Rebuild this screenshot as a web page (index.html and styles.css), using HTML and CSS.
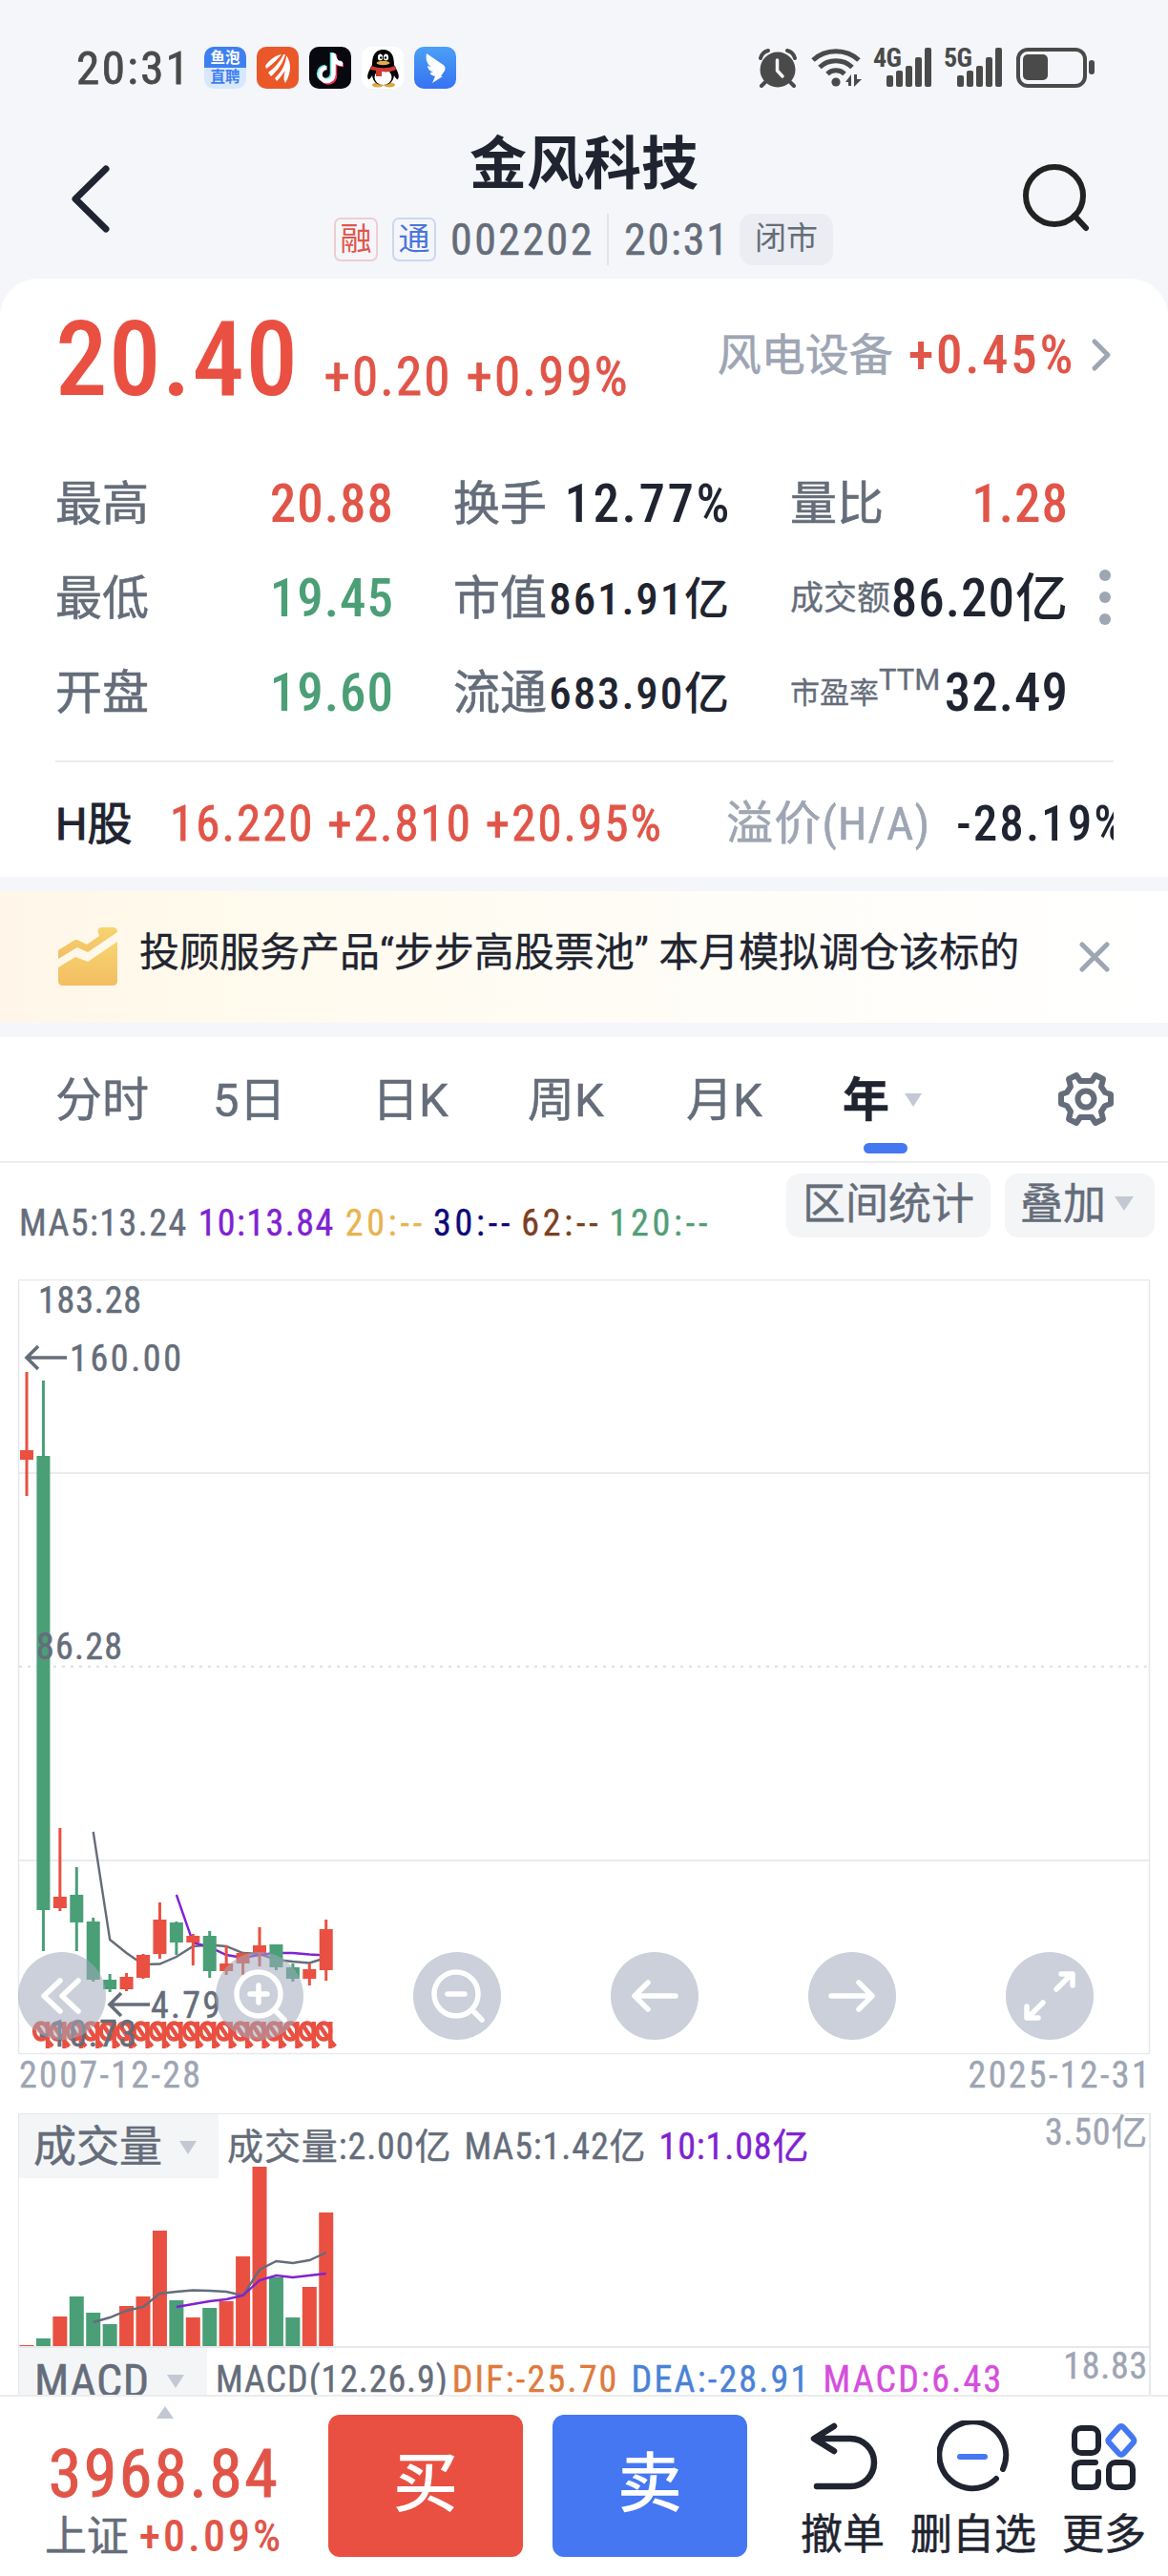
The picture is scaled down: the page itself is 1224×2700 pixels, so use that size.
FILE: index.html
```html
<!DOCTYPE html>
<html lang="zh-CN">
<head>
    <meta charset="UTF-8">
    <meta name="viewport" content="width=device-width, initial-scale=1.0">
    <title>金风科技 002202</title>
    <link rel="stylesheet" href="styles.css">
</head>
<body>
    <div class="status-bar">
        <span class="clock num">20:31</span>
        <div class="apps">
            <div class="app app-yupao"><span>鱼泡</span><span>直聘</span></div>
            <svg class="app" viewBox="0 0 44 44">
                <rect width="44" height="44" rx="10" fill="#ea5728"/>
                <path fill="#fff" d="M9 20C14 13 20 9 26 8C22 13 15 20 10 23ZM12 27C19 22 25 15 28 8L30 8C28 17 21 26 15 31ZM19 33C26 27 31 17 31 9C37 17 36 28 30 38C28 35 28 31 30 25C27 29 25 32 21 36Z"/>
            </svg>
            <svg class="app" viewBox="0 0 44 44">
                <rect width="44" height="44" rx="10" fill="#08080f"/>
                <path fill="none" stroke="#5fe6e6" stroke-width="4.5" d="M24 6V28A7 7 0 1 1 17 21M24 8C25 14 29 17 34 17"/>
                <path fill="none" stroke="#f0385a" stroke-width="4.5" d="M27 8V30A7 7 0 0 1 14 34M27 12C28 16 31 19 36 19"/>
                <path fill="none" stroke="#fff" stroke-width="4.5" d="M25.500 7V29A7 7 0 1 1 18.500 22M26 10C27 15 30 18 35 18"/>
            </svg>
            <svg class="app" viewBox="0 0 44 44">
                <rect width="44" height="44" rx="10" fill="#fff"/>
                <ellipse cx="17" cy="40" rx="6" ry="2.500" fill="#dfa63f"/>
                <ellipse cx="29" cy="40" rx="6" ry="2.500" fill="#dfa63f"/>
                <path fill="#000" d="M11 19C11 8 15 3 22.500 3S34 8 34 19C38 26 40 31 38 34C37 35 35 32 34 30C33 37 29 40 22.500 40S12 37 11 30C10 32 8 35 7 34C5 31 7 26 11 19Z"/>
                <ellipse cx="22.500" cy="32" rx="9" ry="8" fill="#fff"/>
                <ellipse cx="19.500" cy="11" rx="2.600" ry="3.600" fill="#fff"/>
                <ellipse cx="25.500" cy="11" rx="2.600" ry="3.600" fill="#fff"/>
                <circle cx="20.200" cy="11.500" r="1.200"/><circle cx="25" cy="11.500" r="1.200"/>
                <ellipse cx="22.500" cy="17" rx="7" ry="2.200" fill="#e4ac42"/>
                <path fill="#cf3a33" d="M10 20C18 23 28 23 35 20L36 24C32 26 26 27 21 26V31H15V25L9 24Z"/>
            </svg>
            <svg class="app" viewBox="0 0 44 44">
                <defs><linearGradient id="ding" x1="0" y1="0" x2="0" y2="1"><stop offset="0" stop-color="#4ba0f6"/><stop offset="1" stop-color="#3672f2"/></linearGradient></defs>
                <rect width="44" height="44" rx="10" fill="url(#ding)"/>
                <path fill="#fff" d="M13 7L29 18C33 20 33 23 32 25L28 31L30 31L19 38L22 31L19 30C17 29 17 28 17 27L20 27C16 25 14 23 14 20L18 21C13 18 12 13 13 7Z"/>
            </svg>
        </div>
        <div class="signals">
            <svg width="42" height="42" viewBox="0 0 42 42" fill="none" stroke="#4a4a4a">
                <circle cx="21" cy="23" r="18.500" fill="#4a4a4a" stroke="none"/>
                <path stroke-width="4" stroke-linecap="round" d="M3 11C4 7 7 4 11 3M39 11C38 7 35 4 31 3M8 36L4 40M34 36L38 40"/>
                <path stroke="#f4f6fa" stroke-width="3.500" stroke-linecap="round" d="M20.500 13V24L26 30"/>
            </svg>
            <svg class="wifi" width="54" height="42" viewBox="0 0 54 42" fill="none" stroke="#4a4a4a" stroke-width="5">
                <path d="M2 13C15 .500 37 .500 50 13M9 20.500C18 11.500 34 11.500 43 20.500M17 27.500C22 22.500 30 22.500 35 27.500"/>
                <circle cx="26" cy="36" r="4.600" fill="#4a4a4a" stroke="none"/>
                <path fill="#4a4a4a" stroke="none" d="M36 36L42 28V40H39V36ZM45 28H48V33H53L45 41Z"/>
            </svg>
            <div class="cell">
                <span class="num">4G</span>
                <svg width="62" height="42" viewBox="0 0 62 42" fill="#4a4a4a"><rect x="14" y="29" width="7" height="12" rx="2"/><rect x="24" y="24" width="7" height="17" rx="2"/><rect x="34" y="19" width="7" height="22" rx="2"/><rect x="44" y="10" width="7" height="31" rx="2"/><rect x="54" y="0" width="7" height="41" rx="2"/></svg>
            </div>
            <div class="cell">
                <span class="num">5G</span>
                <svg width="62" height="42" viewBox="0 0 62 42" fill="#4a4a4a"><rect x="14" y="29" width="7" height="12" rx="2"/><rect x="24" y="24" width="7" height="17" rx="2"/><rect x="34" y="19" width="7" height="22" rx="2"/><rect x="44" y="10" width="7" height="31" rx="2"/><rect x="54" y="0" width="7" height="41" rx="2"/></svg>
            </div>
            <svg class="battery" width="84" height="42" viewBox="0 0 84 42">
                <rect x="2" y="2" width="70" height="38" rx="10" fill="none" stroke="#4a4a4a" stroke-width="4"/>
                <rect x="7" y="7" width="26" height="27" rx="5" fill="#4a4a4a"/>
                <rect x="76" y="13" width="6" height="15" rx="3" fill="#4a4a4a"/>
            </svg>
        </div>
    </div>

    <div class="nav">
        <svg class="back" width="44" height="74" viewBox="0 0 44 74"><path d="M37 5L5 36.500L37 68" fill="none" stroke="#1f2430" stroke-width="7" stroke-linecap="round" stroke-linejoin="round"/></svg>
        <div class="nav-title">
            <h1>金风科技</h1>
            <div class="sub">
                <span class="tag tag-red">融</span>
                <span class="tag tag-blue">通</span>
                <span class="code num">002202</span>
                <span class="time num">20:31</span>
                <span class="closed">闭市</span>
            </div>
        </div>
        <svg class="search" width="74" height="74" viewBox="0 0 74 74" fill="none" stroke="#222" stroke-width="6" stroke-linecap="round"><circle cx="34" cy="33" r="30"/><path d="M55 54L67 67"/></svg>
    </div>

    <div class="card">
        <div class="quote">
            <span class="price num up">20.40</span>
            <span class="change num up">+0.20 +0.99%</span>
            <div class="industry">
                <span class="industry-name">风电设备</span>
                <span class="num up">+0.45%</span>
                <svg width="22" height="36" viewBox="0 0 22 36"><path d="M4 4L18 18L4 32" fill="none" stroke="#9ea5b3" stroke-width="5" stroke-linecap="round" stroke-linejoin="round"/></svg>
            </div>
        </div>

        <div class="stats-wrap">
            <div class="stats">
                <div class="stat"><label>最高</label><b class="num up">20.88</b></div>
                <div class="stat"><label>换手</label><b class="num wide">12.77%</b></div>
                <div class="stat"><label>量比</label><b class="num up">1.28</b></div>
                <div class="stat"><label>最低</label><b class="num down">19.45</b></div>
                <div class="stat"><label>市值</label><b class="num small">861.91亿</b></div>
                <div class="stat"><label class="tight">成交额</label><b class="num">86.20亿</b></div>
                <div class="stat"><label>开盘</label><b class="num down">19.60</b></div>
                <div class="stat"><label>流通</label><b class="num small">683.90亿</b></div>
                <div class="stat"><label class="tighter">市盈率<sup>TTM</sup></label><b class="num">32.49</b></div>
            </div>
            <div class="dots"><i></i><i></i><i></i></div>
        </div>

        <div class="h-share">
            <span class="h-name">H股</span>
            <span class="h-price num up">16.220 +2.810 +20.95%</span>
            <span class="premium num">溢价(H/A)</span>
            <span class="h-val num">-28.19%</span>
        </div>
    </div>

    <div class="banner">
        <svg width="62" height="62" viewBox="0 0 62 62">
            <defs><linearGradient id="gold" x1="0" y1="0" x2="0" y2="1"><stop offset="0" stop-color="#f7d56f"/><stop offset="1" stop-color="#f3bd63"/></linearGradient></defs>
            <path fill="url(#gold)" d="M0 24L16 14Q19 12 22 14L30 18L43 9Q39 0 46 0H57Q62 0 62 5L31 26L20 21L0 33Z"/>
            <path fill="url(#gold)" d="M0 42L18 31L31 36L62 15V56Q62 61 57 61H5Q0 61 0 56Z"/>
        </svg>
        <span class="banner-text">投顾服务产品“步步高股票池” 本月模拟调仓该标的</span>
        <svg class="close" width="32" height="32" viewBox="0 0 32 32"><path d="M3 3L29 29M29 3L3 29" stroke="#9ea5b3" stroke-width="5" stroke-linecap="round"/></svg>
    </div>

    <div class="tabs">
        <span class="tab t1">分时</span>
        <span class="tab t2">5日</span>
        <span class="tab t3">日K</span>
        <span class="tab t4">周K</span>
        <span class="tab t5">月K</span>
        <span class="tab t6 active">年<i class="caret"></i></span>
        <svg class="gear" width="60" height="58" viewBox="-30 -29 60 58" fill="none" stroke="#656d7a" stroke-width="6" stroke-linejoin="round">
            <path d="M-10 -25L-6 -19H6L10 -25L18 -21L16 -13L20 -7L26 -5V5L20 7L16 13L18 21L10 25L6 19H-6L-10 25L-18 21L-16 13L-20 7L-26 5V-5L-20 -7L-16 -13L-18 -21Z"/>
            <circle r="8.500"/>
        </svg>
    </div>

    <div class="ma-row">
        <div class="ma num">
            <span>MA5:13.24</span><span class="c-purple">10:13.84</span><span class="c-gold dash">20:--</span><span class="c-navy dash">30:--</span><span class="c-brown dash">62:--</span><span class="c-green dash">120:--</span>
        </div>
        <span class="pill">区间统计</span>
        <span class="pill">叠加<i class="caret"></i></span>
    </div>

    <div class="chart">
        <svg id="kline" width="1224" height="813" viewBox="0 1341 1224 813"></svg>
        <div class="tools">
            <svg viewBox="-46 -46 92 92"><path d="M-2 -16L-19 0L-2 16M17 -16L0 0L17 16"/></svg>
            <svg viewBox="-46 -46 92 92"><circle cx="-1" cy="-2" r="23"/><path d="M-10 -2H8M-1 -11V7M16 15L26 25"/></svg>
            <svg viewBox="-46 -46 92 92"><circle cx="-1" cy="-2" r="23"/><path d="M-10 -2H8M16 15L26 25"/></svg>
            <svg viewBox="-46 -46 92 92"><path d="M22 0H-20M-7 -14L-21 0L-7 14"/></svg>
            <svg viewBox="-46 -46 92 92"><path d="M-22 0H20M7 -14L21 0L7 14"/></svg>
            <svg viewBox="-46 -46 92 92"><path d="M7 -7L22 -22M12 -23H24V-11M-7 7L-22 22M-12 23H-24V11"/></svg>
        </div>
    </div>
    <div class="dates num"><span>2007-12-28</span><span>2025-12-31</span></div>

    <div class="panel volume">
        <svg id="vol" width="1185" height="244" viewBox="20 2216 1185 244"></svg>
        <div class="panel-head">
            <span class="picker">成交量<i class="caret"></i></span>
            <span class="legend num"><span>成交量:2.00亿</span><span>MA5:1.42亿</span><span class="c-purple">10:1.08亿</span></span>
            <span class="max num">3.50亿</span>
        </div>
    </div>
    <div class="panel macd">
        <div class="panel-head">
            <span class="picker">MACD<i class="caret"></i></span>
            <span class="legend num"><span>MACD(12.26.9)</span><span class="c-orange">DIF:-25.70</span><span class="c-blue">DEA:-28.91</span><span class="c-pink">MACD:6.43</span></span>
            <span class="max num">18.83</span>
        </div>
    </div>

    <div class="bottom-bar">
        <div class="index">
            <i class="caret caret-up"></i>
            <div class="index-value num up">3968.84</div>
            <div class="index-name">上证 <span class="num up">+0.09%</span></div>
        </div>
        <div class="btn buy">买</div>
        <div class="btn sell">卖</div>
        <div class="actions">
            <div class="action">
                <svg width="76" height="76" viewBox="0 0 76 76" fill="none" stroke="#1f2430" stroke-width="6.500" stroke-linecap="round" stroke-linejoin="round"><path d="M29 6L8 19L29 32M10 19H46A25 25 0 0 1 46 69H11"/></svg>
                <span>撤单</span>
            </div>
            <div class="action">
                <svg width="76" height="76" viewBox="0 0 76 76" fill="none" stroke="#1f2430" stroke-width="6" stroke-linecap="round"><path d="M69 51A35 35 0 1 0 62 61"/><path stroke="#4577f3" d="M24 38H50"/></svg>
                <span>删自选</span>
            </div>
            <div class="action">
                <svg width="76" height="76" viewBox="0 0 76 76" fill="none" stroke="#1f2430" stroke-width="6" stroke-linecap="round" stroke-linejoin="round"><rect x="7" y="8" width="25" height="26" rx="7"/><rect x="43" y="44" width="25" height="26" rx="7"/><path d="M32 54V63Q32 70 25 70H14Q7 70 7 63V51Q7 44 14 44H29"/><path stroke="#4577f3" d="M53 8Q56 4 59 8L68 18Q71 21 68 24L59 34Q56 38 53 34L44 24Q41 21 44 18Z"/></svg>
                <span>更多</span>
            </div>
        </div>
    </div>
    <script src="chart.js"></script>
</body>
</html>
```
FILE: styles.css
```css
* {
    box-sizing: border-box;
}

body {
    margin: 0;
    width: 1224px;
    height: 2700px;
    overflow: hidden;
    background: #f4f6fa;
    color: #1f2430;
    font-family: Roboto, "Noto Sans CJK SC", sans-serif;
    display: flex;
    flex-direction: column;
}

svg {
    display: block;
    flex: none;
}

.num {
    font-stretch: 75%;
    letter-spacing: 0.04em;
    white-space: nowrap;
}

.up { color: #e15549; }
.down { color: #4b9f76; }

.c-purple { color: #7f22d2; }
.c-gold { color: #e8b350; }
.c-navy { color: #0b0a78; }
.c-brown { color: #7c401f; }
.c-green { color: #519e76; }
.c-orange { color: #de7a3c; }
.c-blue { color: #4a82d8; }
.c-pink { color: #d44fdc; }

.caret {
    display: inline-block;
    border: 9px solid transparent;
    border-top: 14px solid #c3c8d4;
    border-bottom: 0;
}

/* status bar */
.status-bar {
    height: 120px;
    flex: none;
    display: flex;
    padding: 49px 75px 0 80px;
    color: #4a4a4a;
}

.clock {
    width: 134px;
    font-size: 49px;
    line-height: 46px;
    letter-spacing: 0.05em;
    -webkit-text-stroke: 0.8px #4a4a4a;
}

.apps {
    display: flex;
    gap: 11px;
}

.app {
    width: 44px;
    height: 44px;
}

.app-yupao {
    border-radius: 10px;
    background: linear-gradient(#3f80f0 50%, #d8e8fc 50%);
    font-size: 15.5px;
    font-weight: 700;
    line-height: 20px;
    text-align: center;
    color: #fff;
    padding-top: 2px;
}

.app-yupao span {
    display: block;
}

.app-yupao span + span {
    color: #3f80f0;
}

.signals {
    margin-left: auto;
    padding-top: 1px;
    display: flex;
}

.wifi {
    margin-left: 14px;
}

.cell {
    position: relative;
    margin-left: 11px;
}

.cell + .cell {
    margin-left: 12px;
}

.cell span {
    position: absolute;
    left: 0;
    top: 0;
    font-size: 28px;
    line-height: 21px;
    font-weight: 700;
    letter-spacing: -0.02em;
}

.battery {
    margin-left: 14px;
}

/* title */
.nav {
    height: 172px;
    flex: none;
    display: grid;
    grid-template-columns: 344px 536px 344px;
}

.back {
    margin: 52px 0 0 74px;
}

.search {
    margin: 52px 0 0 191px;
}

.nav-title h1 {
    margin: 17px 0 0;
    font-size: 60px;
    line-height: 72px;
    font-weight: 700;
    text-align: center;
}

.sub {
    display: flex;
    align-items: center;
    height: 54px;
    margin-top: 15px;
    padding-left: 6px;
    color: #656d7a;
}

.tag {
    width: 46px;
    height: 46px;
    line-height: 41px;
    border: 2px solid;
    border-radius: 7px;
    font-size: 33px;
    text-align: center;
    margin-right: 15px;
}

.tag-red {
    color: #e0564a;
    border-color: #efcdd0;
}

.tag-blue {
    color: #4b74dc;
    border-color: #ccd8ef;
}

.code {
    font-size: 46px;
    width: 166px;
    border-right: 2px solid #e2e4e9;
    line-height: 54px;
    letter-spacing: 0.053em;
}

.time {
    font-size: 46px;
    padding-left: 16px;
    width: 137px;
}

.code, .time {
    -webkit-text-stroke: 0.5px #656d7a;
}

.closed {
    width: 98px;
    line-height: 52px;
    height: 54px;
    border-radius: 14px;
    background: #ecedf2;
    font-size: 33px;
    text-align: center;
}

/* quote card */
.card {
    height: 627px;
    flex: none;
    background: #fff;
    border-radius: 40px 40px 0 0;
    padding: 31px 57px 0 58px;
}

.quote {
    height: 108px;
    display: flex;
    align-items: baseline;
    line-height: 108px;
}

.price {
    font-size: 109px;
    font-weight: 500;
    letter-spacing: 0.013em;
    color: #e95041;
}

.change {
    font-size: 55px;
    margin-left: 26px;
    -webkit-text-stroke: 0.8px #e15549;
}

.industry {
    margin-left: auto;
    display: flex;
    align-items: center;
    align-self: flex-start;
    height: 98px;
    font-size: 55px;
    font-weight: 500;
}

.industry .num {
    letter-spacing: 0.048em;
}

.industry-name {
    font-size: 46px;
    font-weight: 400;
    color: #9ea5b3;
    margin-right: 16px;
    -webkit-text-stroke: 0.6px #9ea5b3;
}

.industry svg {
    margin: 0 2px 0 16px;
}

.stats-wrap {
    display: flex;
    margin-top: 48px;
}

.stats {
    display: grid;
    grid-template-columns: 353px 289px 290px;
    gap: 0 64px;
    grid-auto-rows: 99px;
    width: 1060px;
}

.stat {
    display: flex;
    justify-content: space-between;
    line-height: 99px;
    white-space: nowrap;
}

.stat label {
    font-size: 49px;
    color: #656d7a;
    -webkit-text-stroke: 0.6px #656d7a;
}

.stat b {
    font-size: 55px;
    font-weight: 500;
    letter-spacing: 0.018em;
    margin-right: -2px;
}

.stat b.wide {
    letter-spacing: 0.046em;
    margin-right: -3px;
}

.stat b.small {
    font-size: 47px;
    letter-spacing: 0.04em;
}

.stat .tight {
    font-size: 35px;
    -webkit-text-stroke: 0.3px #656d7a;
}

.stat .tighter {
    font-size: 31px;
    -webkit-text-stroke: 0.3px #656d7a;
}

.stat sup {
    font-size: 31px;
    line-height: 0;
    vertical-align: 14px;
}

.dots {
    width: 12px;
    margin: 118px 0 0 34px;
}

.dots i {
    display: block;
    width: 12px;
    height: 12px;
    border-radius: 50%;
    background: #9ea5b3;
    margin-bottom: 11px;
}

.h-share {
    margin-top: 21px;
    border-top: 2px solid #ebecee;
    height: 122px;
    padding-top: 6px;
    display: flex;
    overflow: hidden;
    line-height: 118px;
    font-size: 51px;
    white-space: nowrap;
}

.h-share span {
    flex: none;
}

.h-name {
    width: 120px;
    font-size: 47px;
    -webkit-text-stroke: 1px #1f2430;
}

.h-price {
    width: 583px;
    -webkit-text-stroke: 0.8px #e15549;
}

.premium {
    width: 241px;
    color: #9ea5b3;
    font-size: 49px;
    letter-spacing: 0.025em;
    -webkit-text-stroke: 0.6px #9ea5b3;
}

.h-val {
    font-weight: 500;
}

/* banner */
.banner {
    height: 138px;
    flex: none;
    margin: 15px 0;
    background: linear-gradient(90deg, #fff6e9, #fffaec 18%, #fffcf4 45%, #fff);
    display: flex;
    align-items: center;
    padding: 0 61px 0 61px;
}

.banner-text {
    margin: -9px 0 0 23px;
    font-size: 42px;
    line-height: 60px;
    white-space: nowrap;
    width: 980px;
    flex: none;
    -webkit-text-stroke: 0.3px #1f2430;
}

.close {
    margin-left: 5px;
}

/* period tabs */
.tabs {
    height: 132px;
    flex: none;
    background: #fff;
    border-bottom: 2px solid #ebecee;
    display: flex;
    line-height: 134px;
    font-size: 49px;
    color: #656d7a;
    padding-left: 58px;
}

.tab {
    flex: none;
    -webkit-text-stroke: 0.5px;
}

.t1 { width: 165px; }
.t2 { width: 167px; }
.t3 { width: 163px; }
.t4 { width: 166px; }
.t5 { width: 164px; }
.t6 { width: 103px; }

.active {
    position: relative;
    color: #1f2430;
    font-weight: 700;
}

.active .caret {
    margin: 0 0 9px 16px;
    vertical-align: middle;
}

.active::after {
    content: "";
    position: absolute;
    left: 22px;
    bottom: 8px;
    width: 46px;
    height: 11px;
    border-radius: 6px;
    background: #4577f3;
}

.gear {
    margin: 36px 0 0 122px;
}

/* moving averages */
.ma-row {
    height: 122px;
    flex: none;
    background: #fff;
    display: flex;
    align-items: flex-start;
    padding: 11px 13px 0 20px;
    color: #656d7a;
}

.ma {
    width: 804px;
    flex: none;
    display: flex;
    gap: 11px;
    font-size: 38px;
    line-height: 48px;
    padding-top: 28px;
    letter-spacing: 0.038em;
    -webkit-text-stroke: 0.4px;
}

.dash {
    letter-spacing: 0.1em;
    margin-right: -3px;
}

.pill {
    height: 67px;
    line-height: 66px;
    padding: 0 17px;
    border-radius: 14px;
    background: #f4f5f7;
    font-size: 45px;
    white-space: nowrap;
    margin-right: 15px;
    -webkit-text-stroke: 0.4px;
}

.pill + .pill {
    padding: 0 22px 0 16px;
    margin-right: 0;
}

.pill .caret {
    margin: 0 0 10px 9px;
    vertical-align: middle;
    border-width: 15px 10px 0;
}

/* main chart */
.chart {
    position: relative;
    height: 813px;
    flex: none;
    background: #fff;
}

.tools {
    position: absolute;
    left: 19px;
    right: 78px;
    bottom: 16px;
    display: flex;
    justify-content: space-between;
}

.tools svg {
    width: 92px;
    height: 92px;
    border-radius: 50%;
    background: rgba(160, 170, 187, 0.55);
    fill: none;
    stroke: #fff;
    stroke-width: 5.5;
    stroke-linecap: round;
    stroke-linejoin: round;
}

.axis {
    fill: #656d7a;
    stroke: #656d7a;
    stroke-width: 0.5px;
    font-stretch: 75%;
}

.dates {
    height: 61px;
    flex: none;
    background: #fff;
    display: flex;
    justify-content: space-between;
    padding: 0 17px 0 20px;
    font-size: 38px;
    line-height: 42px;
    color: #9ea5b3;
    letter-spacing: 0.062em;
    -webkit-text-stroke: 0.4px;
}

/* indicator panels */
.panel {
    position: relative;
    flex: none;
    border: 1px solid #e6e8ec;
    border-width: 1px 2px 0 1px;
    background: #fff;
    box-shadow: -20px 0 0 #fff, 20px 0 0 #fff;
    width: 1187px;
    margin-left: 19px;
}

.volume {
    height: 244px;
}

.volume > svg {
    position: absolute;
    left: 0;
    top: 0;
}

.macd {
    height: 51px;
    overflow: hidden;
    border-top-width: 2px;
}

.panel-head {
    position: relative;
    display: flex;
    align-items: flex-start;
    color: #656d7a;
}

.picker {
    width: 209px;
    height: 67px;
    line-height: 69px;
    padding-left: 15px;
    background: #f4f5f7;
    font-size: 45px;
    flex: none;
    -webkit-text-stroke: 0.5px;
}

.picker .caret {
    margin: 0 0 6px 18px;
    vertical-align: middle;
    border-width: 14px 9px 0;
}

.legend {
    display: flex;
    gap: 13px;
    font-size: 38px;
    line-height: 68px;
    margin-left: 9px;
    letter-spacing: 0.024em;
    -webkit-text-stroke: 0.4px;
}

.max {
    margin-left: auto;
    margin-right: 1px;
    font-size: 38px;
    line-height: 38px;
    color: #9ea5b3;
    letter-spacing: 0.02em;
    -webkit-text-stroke: 0.4px;
}

.macd .picker {
    width: 197px;
    padding-left: 16px;
    font-size: 48px;
    font-stretch: 75%;
    letter-spacing: 0.01em;
}

.macd .legend {
    line-height: 66px;
}

.macd .legend span + span {
    letter-spacing: 0.058em;
}

.macd .legend span:nth-child(2) {
    margin-left: -9px;
}

/* bottom bar */
.bottom-bar {
    position: relative;
    height: 191px;
    flex: none;
    background: #fff;
    border-top: 2px solid #ebecee;
    display: flex;
}

.index {
    width: 344px;
    text-align: center;
    position: relative;
}

.index .caret-up {
    position: absolute;
    left: 164px;
    top: 10px;
    border-width: 0 9px 13px;
    border-bottom: 13px solid #c3c8d4;
}

.index-value {
    margin-top: 41px;
    font-size: 70px;
    line-height: 80px;
    letter-spacing: 0.034em;
    -webkit-text-stroke: 1px #e15549;
}

.index-name {
    font-size: 44px;
    line-height: 52px;
    margin-top: -1px;
    color: #656d7a;
    -webkit-text-stroke: 0.5px;
}

.index-name .num {
    font-size: 46px;
    font-weight: 500;
    letter-spacing: 0.065em;
    -webkit-text-stroke: 0;
}

.btn {
    width: 204px;
    height: 149px;
    margin-top: 19px;
    border-radius: 12px;
    font-size: 68px;
    font-weight: 500;
    line-height: 147px;
    text-align: center;
    color: #fff;
}

.buy {
    background: #e95041;
}

.sell {
    background: #4577f3;
    margin-left: 31px;
}

.actions {
    display: flex;
    margin-left: 56px;
    gap: 27px;
    padding-top: 25px;
}

.action {
    display: flex;
    flex-direction: column;
    align-items: center;
    font-size: 44px;
    line-height: 60px;
    white-space: nowrap;
    -webkit-text-stroke: 0.5px;
}

.action span {
    margin-top: 14px;
}
```
FILE: chart.js
```js
const RED = "#e95041";
const GREEN = "#4a9f77";
const GRAY = "#656d7a";
const PURPLE = "#7f22d2";
const x0 = 28;
const step = 17.43;
const cx = i => x0 + i * step;

// [color, high, low, body top, body bottom]
const candles = [
    ["r", 1438, 1568, 1520, 1530], ["g", 1447, 2045, 1526, 2002], ["r", 1916, 2003, 1988, 2000],
    ["g", 1957, 2045, 1986, 2015], ["g", 2010, 2077, 2014, 2075], ["g", 2069, 2088, 2075, 2085],
    ["r", 2068, 2087, 2072, 2085], ["r", 2048, 2074, 2049, 2073], ["r", 1994, 2053, 2012, 2048],
    ["g", 2014, 2049, 2015, 2036], ["r", 2027, 2060, 2029, 2036], ["g", 2024, 2073, 2029, 2066],
    ["r", 2039, 2070, 2058, 2066], ["r", 2047, 2070, 2047, 2058], ["r", 2020, 2061, 2039, 2047],
    ["g", 2038, 2065, 2038, 2062], ["g", 2058, 2077, 2062, 2074], ["r", 2058, 2081, 2064, 2074],
    ["r", 2012, 2076, 2022, 2065]
];
const ma5 = [1920, 2033, 2047, 2059, 2058.5, 2051, 2040, 2038.5, 2040, 2047, 2048, 2054, 2056, 2057.5, 2052];
const ma10 = [1986, 2036, 2041, 2049, 2052, 2049, 2047, 2047, 2048.5, 2049.5];

const volumes = [
    ["r", 2458], ["g", 2451], ["r", 2428], ["g", 2407], ["g", 2424], ["g", 2436], ["r", 2417],
    ["r", 2407], ["r", 2338], ["g", 2411], ["r", 2429], ["g", 2419], ["r", 2412], ["r", 2365],
    ["r", 2271], ["g", 2387], ["g", 2429], ["r", 2397], ["r", 2319]
];
const vma5 = [2434, 2429, 2422, 2418, 2404, 2402, 2400.5, 2401, 2402, 2406, 2379, 2370, 2372, 2369, 2361];
const vma10 = [2418, 2415, 2412, 2410, 2406, 2390, 2385, 2387, 2385, 2383];

function line(points, start, color) {
    const p = points.map((y, i) => (cx(start + i)) + "," + y).join(" ");
    return `<polyline points="${p}" fill="none" stroke="${color}" stroke-width="2.4"/>`;
}

function label(text, x, y, width) {
    return `<text class="axis" x="${x}" y="${y}" textLength="${width}" font-size="38">${text}</text>`;
}

function arrow(x, y) {
    return `<path d="M${x + 43} ${y}H${x}M${x + 13} ${y - 12}L${x + 1} ${y}L${x + 13} ${y + 12}" fill="none" stroke="${GRAY}" stroke-width="3.6"/>`;
}

let k = `<rect x="19.5" y="1341.5" width="1185" height="811" fill="none" stroke="#e6e8ec" stroke-width="1.5"/>
<path d="M20 1544H1204M20 1950H1204" stroke="#e9ebee" stroke-width="2"/>
<path d="M20 1746.700H1204" stroke="#dcdee2" stroke-width="2" stroke-dasharray="3 6"/>`;
k += line(ma5, 4, GRAY) + line(ma10, 9, PURPLE);
candles.forEach((c, i) => {
    const color = c[0] === "r" ? RED : GREEN;
    k += `<rect x="${cx(i) - 1.5}" y="${c[1]}" width="3" height="${c[2] - c[1]}" fill="${color}"/>
<rect x="${cx(i) - 7}" y="${c[3]}" width="14" height="${c[4] - c[3]}" fill="${color}"/>`;
});
// ex-dividend markers along the bottom
for (let i = 0; i < 18; i++) {
    const s = 50 + i * step;
    k += `<g fill="none" stroke="${RED}" stroke-width="4.4"><ellipse cx="${s - 7}" cy="2129" rx="7" ry="8.5"/><path d="M${s - 12} 2122L${s - 2} 2137M${s} 2119V2147M${s - 1} 2138L${s + 5} 2145"/></g>`;
}
k += label("183.28", 40, 1376, 108) + label("86.28", 38, 1739, 90) + label("-10.73", 41, 2145, 102);
k += arrow(27, 1423) + label("160.00", 73, 1437, 117) + arrow(114, 2101) + label("4.79", 158, 2115, 73);
document.getElementById("kline").innerHTML = k;

let v = "";
volumes.forEach((b, i) => {
    v += `<rect x="${cx(i) - 7.5}" y="${b[1]}" width="15" height="${2459 - b[1]}" fill="${b[0] === "r" ? RED : GREEN}"/>`;
});
v += line(vma5, 4, GRAY) + line(vma10, 9, PURPLE);
document.getElementById("vol").innerHTML = v;
```
